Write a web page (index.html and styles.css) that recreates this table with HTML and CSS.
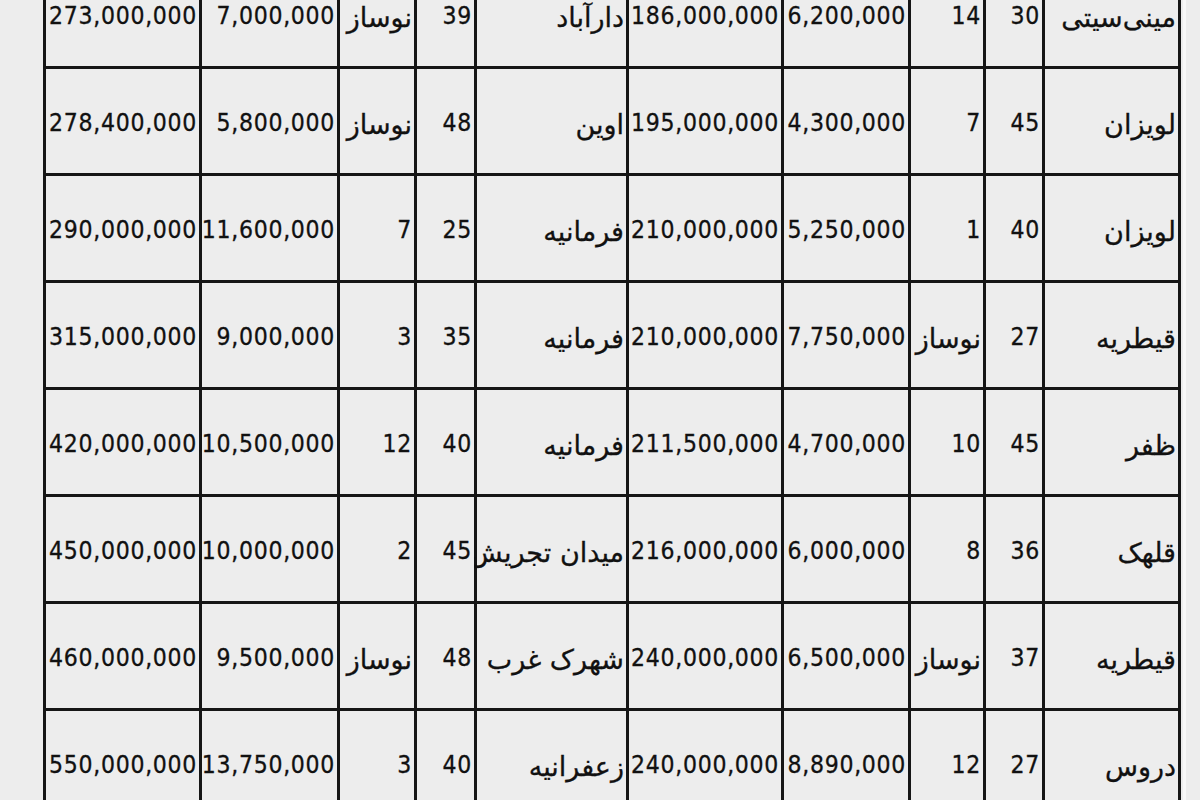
FILE: index.html
```html
<!DOCTYPE html>
<html lang="fa">
<head>
<meta charset="utf-8">
<title>جدول قیمت</title>
<link rel="stylesheet" href="styles.css">
</head>
<body>
<div class="sheet" dir="rtl">
  <div class="row">
    <div class="c fa">مینی‌سیتی</div><div class="c">30</div><div class="c">14</div><div class="c">6,200,000</div><div class="c">186,000,000</div><div class="c fa">دارآباد</div><div class="c">39</div><div class="c fa">نوساز</div><div class="c">7,000,000</div><div class="c">273,000,000</div>
  </div>
  <div class="row">
    <div class="c fa">لویزان</div><div class="c">45</div><div class="c">7</div><div class="c">4,300,000</div><div class="c">195,000,000</div><div class="c fa">اوین</div><div class="c">48</div><div class="c fa">نوساز</div><div class="c">5,800,000</div><div class="c">278,400,000</div>
  </div>
  <div class="row">
    <div class="c fa">لویزان</div><div class="c">40</div><div class="c">1</div><div class="c">5,250,000</div><div class="c">210,000,000</div><div class="c fa">فرمانیه</div><div class="c">25</div><div class="c">7</div><div class="c">11,600,000</div><div class="c">290,000,000</div>
  </div>
  <div class="row">
    <div class="c fa">قیطریه</div><div class="c">27</div><div class="c fa">نوساز</div><div class="c">7,750,000</div><div class="c">210,000,000</div><div class="c fa">فرمانیه</div><div class="c">35</div><div class="c">3</div><div class="c">9,000,000</div><div class="c">315,000,000</div>
  </div>
  <div class="row">
    <div class="c fa">ظفر</div><div class="c">45</div><div class="c">10</div><div class="c">4,700,000</div><div class="c">211,500,000</div><div class="c fa">فرمانیه</div><div class="c">40</div><div class="c">12</div><div class="c">10,500,000</div><div class="c">420,000,000</div>
  </div>
  <div class="row">
    <div class="c fa">قلهک</div><div class="c">36</div><div class="c">8</div><div class="c">6,000,000</div><div class="c">216,000,000</div><div class="c fa">میدان تجریش</div><div class="c">45</div><div class="c">2</div><div class="c">10,000,000</div><div class="c">450,000,000</div>
  </div>
  <div class="row">
    <div class="c fa">قیطریه</div><div class="c">37</div><div class="c fa">نوساز</div><div class="c">6,500,000</div><div class="c">240,000,000</div><div class="c fa">شهرک غرب</div><div class="c">48</div><div class="c fa">نوساز</div><div class="c">9,500,000</div><div class="c">460,000,000</div>
  </div>
  <div class="row">
    <div class="c fa">دروس</div><div class="c">27</div><div class="c">12</div><div class="c">8,890,000</div><div class="c">240,000,000</div><div class="c fa">زعفرانیه</div><div class="c">40</div><div class="c">3</div><div class="c">13,750,000</div><div class="c">550,000,000</div>
  </div>
</div>
</body>
</html>
```

FILE: styles.css
```css
* { box-sizing: border-box; }

html, body {
  margin: 0;
  padding: 0;
  background: #ededed;
  overflow: hidden;
}

.sheet {
  width: 1138px;
  margin: -41px 0 0 43px;
  border-top: 3px solid #161616;
  border-right: 3px solid #161616;
  box-shadow: 2px 0 0 #ededed, 5px 0 0 #f8f8f8;
  font-family: "DejaVu Sans Condensed", "DejaVu Sans", sans-serif;
  font-stretch: condensed;
  font-size: 24.5px;
  letter-spacing: 0.7px;
  color: #111;
  -webkit-text-stroke: 0.3px #111;
}

.row {
  display: grid;
  grid-template-columns: 136px 59px 75px 127px 155px 152px 60px 77px 138px 156px;
  height: 107px;
}

.c {
  display: flex;
  align-items: center;
  justify-content: flex-start;
  padding: 3px 2px 0 0;
  border-left: 3px solid #161616;
  border-bottom: 3px solid #161616;
  white-space: nowrap;
  background: #ededed;
}

.fa {
  font-family: "DejaVu Sans", sans-serif;
  font-stretch: normal;
  font-size: 27px;
  letter-spacing: 0;
  padding-top: 7px;
}
```
